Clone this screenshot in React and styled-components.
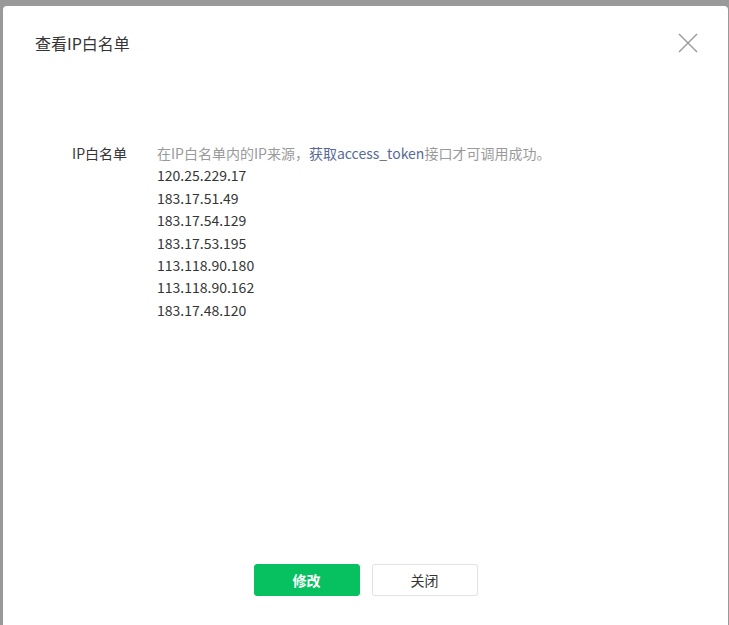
import styled, { createGlobalStyle } from "styled-components";

const GlobalStyle = createGlobalStyle`
  html, body {
    margin: 0;
    padding: 0;
    background: #999999;
    font-family: "Noto Sans CJK SC", "Noto Sans", sans-serif;
    overflow: hidden;
  }
`;

const Mask = styled.div`
  width: 100vw;
  height: 100vh;
  background: #999999;
  padding: 6px 0 0 3px;
  box-sizing: border-box;
  overflow: hidden;
`;

const Dialog = styled.div`
  width: 725px;
  height: 660px;
  background: #fff;
  border-radius: 4px;
  display: flex;
  flex-direction: column;
`;

const Header = styled.div`
  display: flex;
  align-items: center;
  justify-content: space-between;
  padding: 25px 30px 0 32px;
`;

const Title = styled.h3`
  margin: 0;
  font-size: 16px;
  font-weight: 400;
  line-height: 24px;
  color: #353535;
`;

const CloseBtn = styled.button`
  width: 20px;
  height: 20px;
  padding: 0;
  border: none;
  background: none;
  cursor: pointer;
  display: flex;
`;

const Body = styled.div`
  flex: 1;
  padding: 87px 32px 0;
`;

const Row = styled.div`
  display: flex;
  gap: 30px;
`;

const Label = styled.div`
  width: 92px;
  text-align: right;
  font-size: 14px;
  line-height: 22.4px;
  color: #353535;
`;

const Value = styled.div`
  font-size: 14px;
  line-height: 22.4px;
  color: #353535;
`;

const Tips = styled.div`
  color: #9a9a9a;
`;

const Link = styled.a`
  color: #576b95;
  text-decoration: none;
`;

const Footer = styled.div`
  display: flex;
  justify-content: center;
  gap: 12px;
  padding-bottom: 70px;
`;

const Button = styled.button`
  width: 106px;
  height: 32px;
  border-radius: 3px;
  font-family: inherit;
  font-size: 14px;
  cursor: pointer;
  border: 1px solid ${(p) => (p.primary ? "#07c160" : "#e2e2e2")};
  background: ${(p) => (p.primary ? "#07c160" : "#fff")};
  color: ${(p) => (p.primary ? "#fff" : "#353535")};
  font-weight: ${(p) => (p.primary ? 700 : 400)};
`;

const ips = [
  "120.25.229.17",
  "183.17.51.49",
  "183.17.54.129",
  "183.17.53.195",
  "113.118.90.180",
  "113.118.90.162",
  "183.17.48.120",
];

const App = () => {
  return (
    <>
      <GlobalStyle />
      <Mask>
        <Dialog>
          <Header>
            <Title>查看IP白名单</Title>
            <CloseBtn aria-label="关闭">
              <svg width="20" height="20" viewBox="0 0 20 20">
                <path d="M1 1L19 19M19 1L1 19" stroke="#9a9a9a" strokeWidth="1.4" fill="none" />
              </svg>
            </CloseBtn>
          </Header>
          <Body>
            <Row>
              <Label>IP白名单</Label>
              <Value>
                <Tips>
                  在IP白名单内的IP来源，<Link href="#">获取access_token</Link>接口才可调用成功。
                </Tips>
                {ips.map((ip) => (
                  <div key={ip}>{ip}</div>
                ))}
              </Value>
            </Row>
          </Body>
          <Footer>
            <Button primary>修改</Button>
            <Button>关闭</Button>
          </Footer>
        </Dialog>
      </Mask>
    </>
  );
};

export default App;
